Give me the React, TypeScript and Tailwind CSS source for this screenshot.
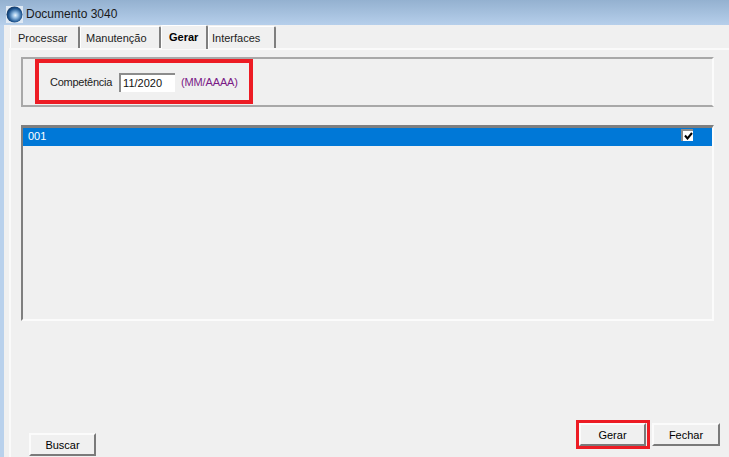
export default function App() {
  const font = "font-['Liberation_Sans',sans-serif]";
  const tab = "h-[22px] pt-[2px] border-t border-t-white border-l border-l-white border-r-2 border-r-[#7f7f7f] rounded-t-[2px] flex items-center text-[11px] text-[#222] bg-[#f0f0f0]";
  const btn = "h-[23px] pt-[1px] bg-[#f0f0f0] border-t-2 border-l-2 border-t-[#fbfbfb] border-l-[#fbfbfb] border-r-2 border-b-2 border-r-[#7a7a7a] border-b-[#7a7a7a] flex items-center justify-center text-[11px] text-black";
  return (
    <div className={`w-[729px] h-[457px] overflow-hidden flex flex-col bg-[#f0f0f0] ${font}`}>
      <div className="h-[25px] shrink-0 bg-gradient-to-b from-[#94b1d0] to-[#b6cfeb] flex items-center pl-[6px] pt-[3px] gap-[3px]">
        <svg width="17" height="17" viewBox="0 0 17 17">
          <defs>
            <radialGradient id="g" cx="0.55" cy="0.55" r="0.6">
              <stop offset="0" stopColor="#eaf6ff" />
              <stop offset="0.3" stopColor="#8db8e0" />
              <stop offset="0.7" stopColor="#1e5590" />
              <stop offset="1" stopColor="#0c2a50" />
            </radialGradient>
          </defs>
          <rect width="17" height="17" fill="#dfe9f4" />
          <circle cx="8.5" cy="8.5" r="8" fill="url(#g)" />
        </svg>
        <span className="text-[12px] text-[#1a1a1a]">Documento 3040</span>
      </div>
      <div className="flex-1 flex min-h-0">
        <div className="w-[4px] shrink-0 bg-[#b9d1ec]" />
        <div className="flex-1 flex flex-col min-w-0 relative">
          <div className="h-[23px] shrink-0 flex items-end pl-[6px]">
            <div className={`${tab} w-[70px] pl-[7px]`}>Processar</div>
            <div className={`${tab} w-[81px] pl-[5px]`}>Manutenção</div>
            <div className="w-[47px] h-[24px] pl-[7px] -mb-px relative z-10 border-t border-t-white border-l border-l-white border-r-2 border-r-[#7f7f7f] rounded-t-[2px] flex items-center text-[11px] font-bold text-black bg-[#f0f0f0]">Gerar</div>
            <div className={`${tab} w-[68px] pl-[3px]`}>Interfaces</div>
          </div>
          <div className="flex-1 ml-[5px] border-t-2 border-l-2 border-[#fafafa] flex flex-col pl-[10px] pr-[13px] pt-[7px] min-h-0">
            <div className="w-[693px] h-[50px] shrink-0 border-t-2 border-l-2 border-[#a8a8a8] border-r-2 border-r-[#fbfbfb] border-b-2 border-b-[#a8a8a8] flex items-center pl-[27px] relative">
              <span className="text-[11px] text-[#222] tracking-[-0.25px]">Competência</span>
              <div className="ml-[7px] w-[56px] h-[19px] bg-white border-t-2 border-l-2 border-[#8c8c8c] border-r-0 border-b-0 flex items-center pl-[2px] pt-[1px] text-[11px] text-[#111]">11/2020</div>
              <span className="ml-[6px] text-[11px] text-[#7a1a86] tracking-[-0.15px]">(MM/AAAA)</span>
              <div className="absolute left-[12px] top-0 w-[218px] h-[45px] border-[4px] border-[#ed1c24]" />
            </div>
            <div className="mt-[18px] w-[693px] h-[196px] shrink-0 border-t-[3px] border-l-2 border-[#7f7f7f] border-r-2 border-r-[#fbfbfb] border-b-2 border-b-[#fbfbfb]">
              <div className="h-[18px] bg-[#0078d7] flex items-start justify-between pl-[5px] pr-[19px] pt-[1px]">
                <span className="text-[11px] leading-[14px] text-white">001</span>
                <div className="w-[12px] h-[12px] bg-white border-t-2 border-l-2 border-[#8a8a8a] flex items-center justify-center">
                  <svg width="9" height="8" viewBox="0 0 9 8">
                    <path d="M1 3.5 L3.5 6.5 L8 1" fill="none" stroke="#000" strokeWidth="2" />
                  </svg>
                </div>
              </div>
            </div>
            <div className="mt-auto flex justify-between items-start pb-[1px]">
              <div className={`${btn} w-[67px] ml-[8px] mt-[10px]`}>Buscar</div>
              <div className="flex gap-[6px] mb-[9px] mr-[-6px] relative -translate-x-[2px]">
                <div className={`${btn} w-[67px]`}>Gerar</div>
                <div className={`${btn} w-[68px]`}>Fechar</div>
                <div className="absolute left-[-3px] top-[-3px] w-[74px] h-[29px] border-[3px] border-[#ed1c24]" />
              </div>
            </div>
          </div>
        </div>
      </div>
    </div>
  );
}
